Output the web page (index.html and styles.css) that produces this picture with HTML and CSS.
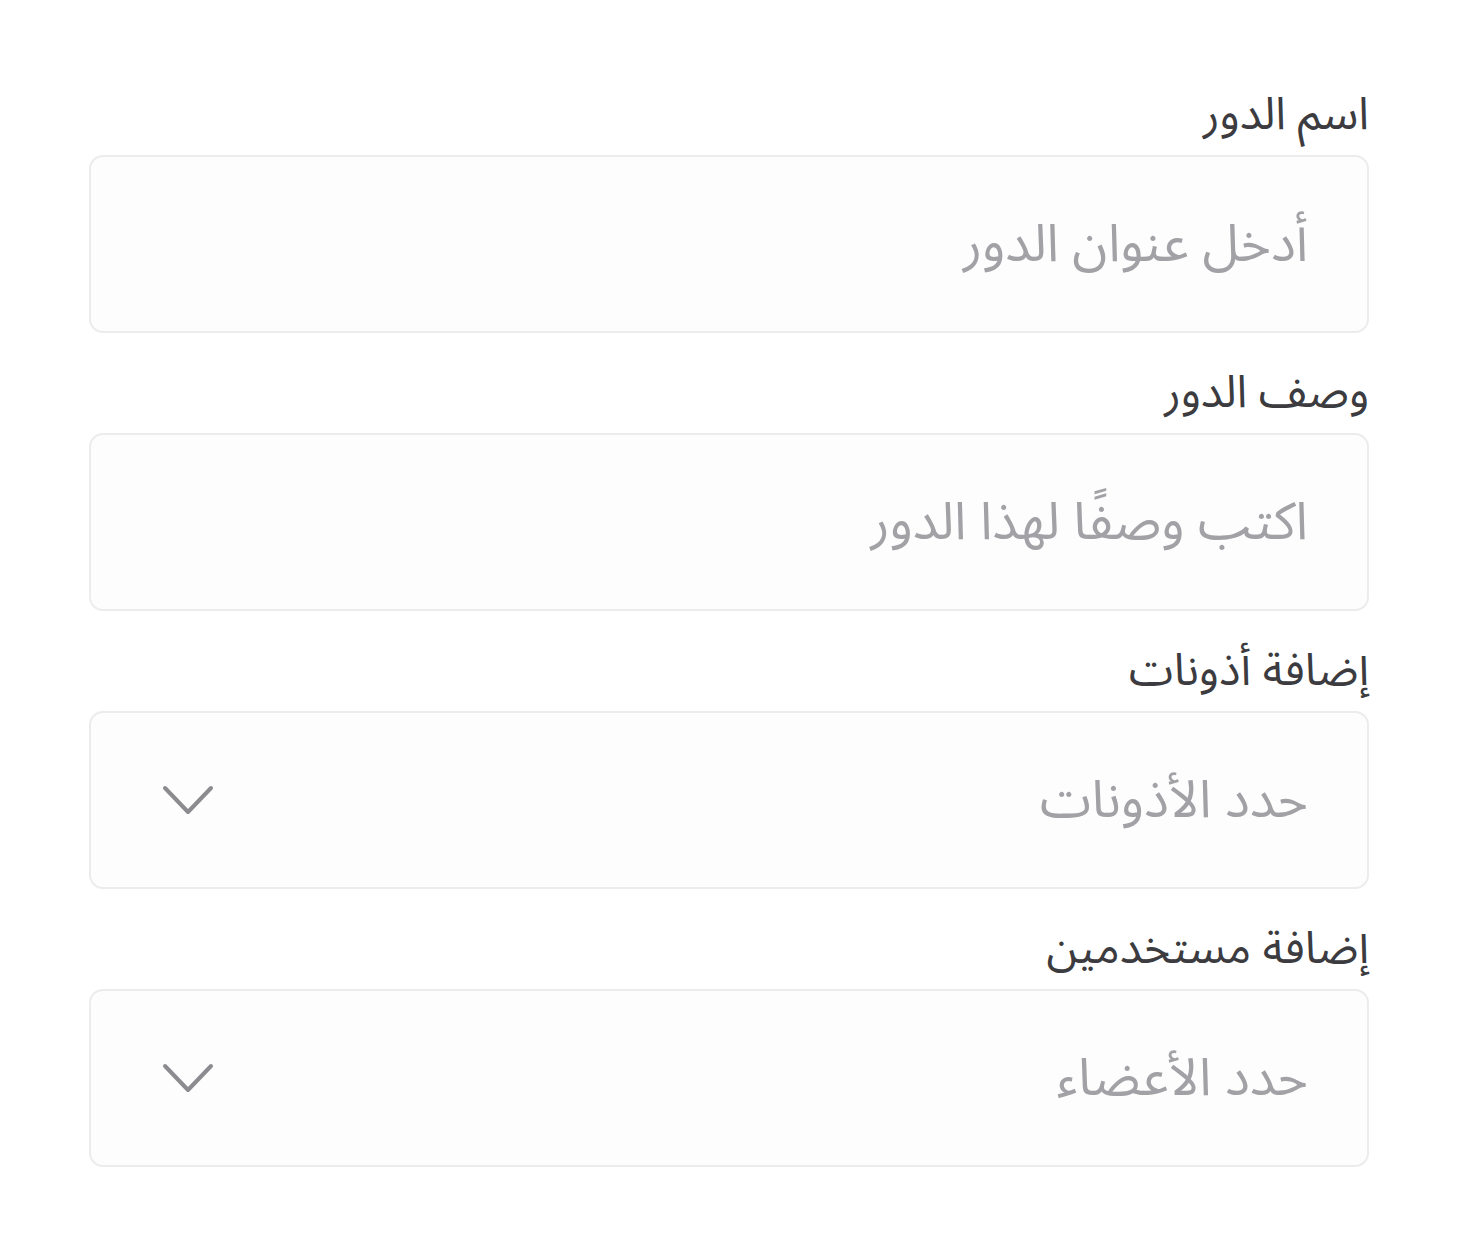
FILE: index.html
```html
<!DOCTYPE html>
<html lang="ar" dir="rtl">
<head>
  <meta charset="UTF-8" />
  <meta name="viewport" content="width=device-width, initial-scale=1.0">
  <title>إضافة دور</title>
  <link rel="stylesheet" href="styles.css">
</head>
<body>
  <form class="role-form">
    <div class="field">
      <label class="field-label" for="role-name">اسم الدور</label>
      <input class="field-input" type="text" id="role-name" placeholder="أدخل عنوان الدور">
    </div>

    <div class="field">
      <label class="field-label" for="role-desc">وصف الدور</label>
      <input class="field-input" type="text" id="role-desc" placeholder="اكتب وصفًا لهذا الدور">
    </div>

    <div class="field">
      <label class="field-label">إضافة أذونات</label>
      <div class="field-input field-select">
        <span class="select-placeholder">حدد الأذونات</span>
        <svg class="chevron" width="54" height="32" viewBox="0 0 54 32">
          <path d="M4 4 L27 28 L50 4" fill="none" stroke="#8c8c90" stroke-width="4" stroke-linecap="round" stroke-linejoin="round"/>
        </svg>
      </div>
    </div>

    <div class="field">
      <label class="field-label">إضافة مستخدمين</label>
      <div class="field-input field-select">
        <span class="select-placeholder">حدد الأعضاء</span>
        <svg class="chevron" width="54" height="32" viewBox="0 0 54 32">
          <path d="M4 4 L27 28 L50 4" fill="none" stroke="#8c8c90" stroke-width="4" stroke-linecap="round" stroke-linejoin="round"/>
        </svg>
      </div>
    </div>
  </form>
</body>
</html>
```

FILE: styles.css
```css
body {
  margin: 0;
  background: #ffffff;
  font-family: "Noto Sans Arabic", "Noto Sans", "DejaVu Sans", sans-serif;
}
.role-form {
  width: 1280px;
  margin: 0 auto;
  padding-top: 85px;
  display: flex;
  flex-direction: column;
  gap: 30px;
}
.field {
  display: flex;
  flex-direction: column;
}
.field-label {
  display: block;
  font-size: 45px;
  line-height: 60px;
  color: #3b3b40;
  margin-bottom: 10px;
}
.field-input {
  box-sizing: border-box;
  width: 100%;
  height: 178px;
  padding: 0 59px 0 58px;
  background: #fdfdfd;
  border: 2px solid #ececec;
  border-radius: 14px;
  font-family: inherit;
  font-size: 52px;
  color: #3b3b40;
  outline: none;
}
.field-input::placeholder {
  color: #a2a2a6;
}
.field-select {
  display: flex;
  align-items: center;
  justify-content: space-between;
  padding-left: 70px;
}
.select-placeholder {
  color: #a2a2a6;
}
.chevron {
  display: block;
}
```
